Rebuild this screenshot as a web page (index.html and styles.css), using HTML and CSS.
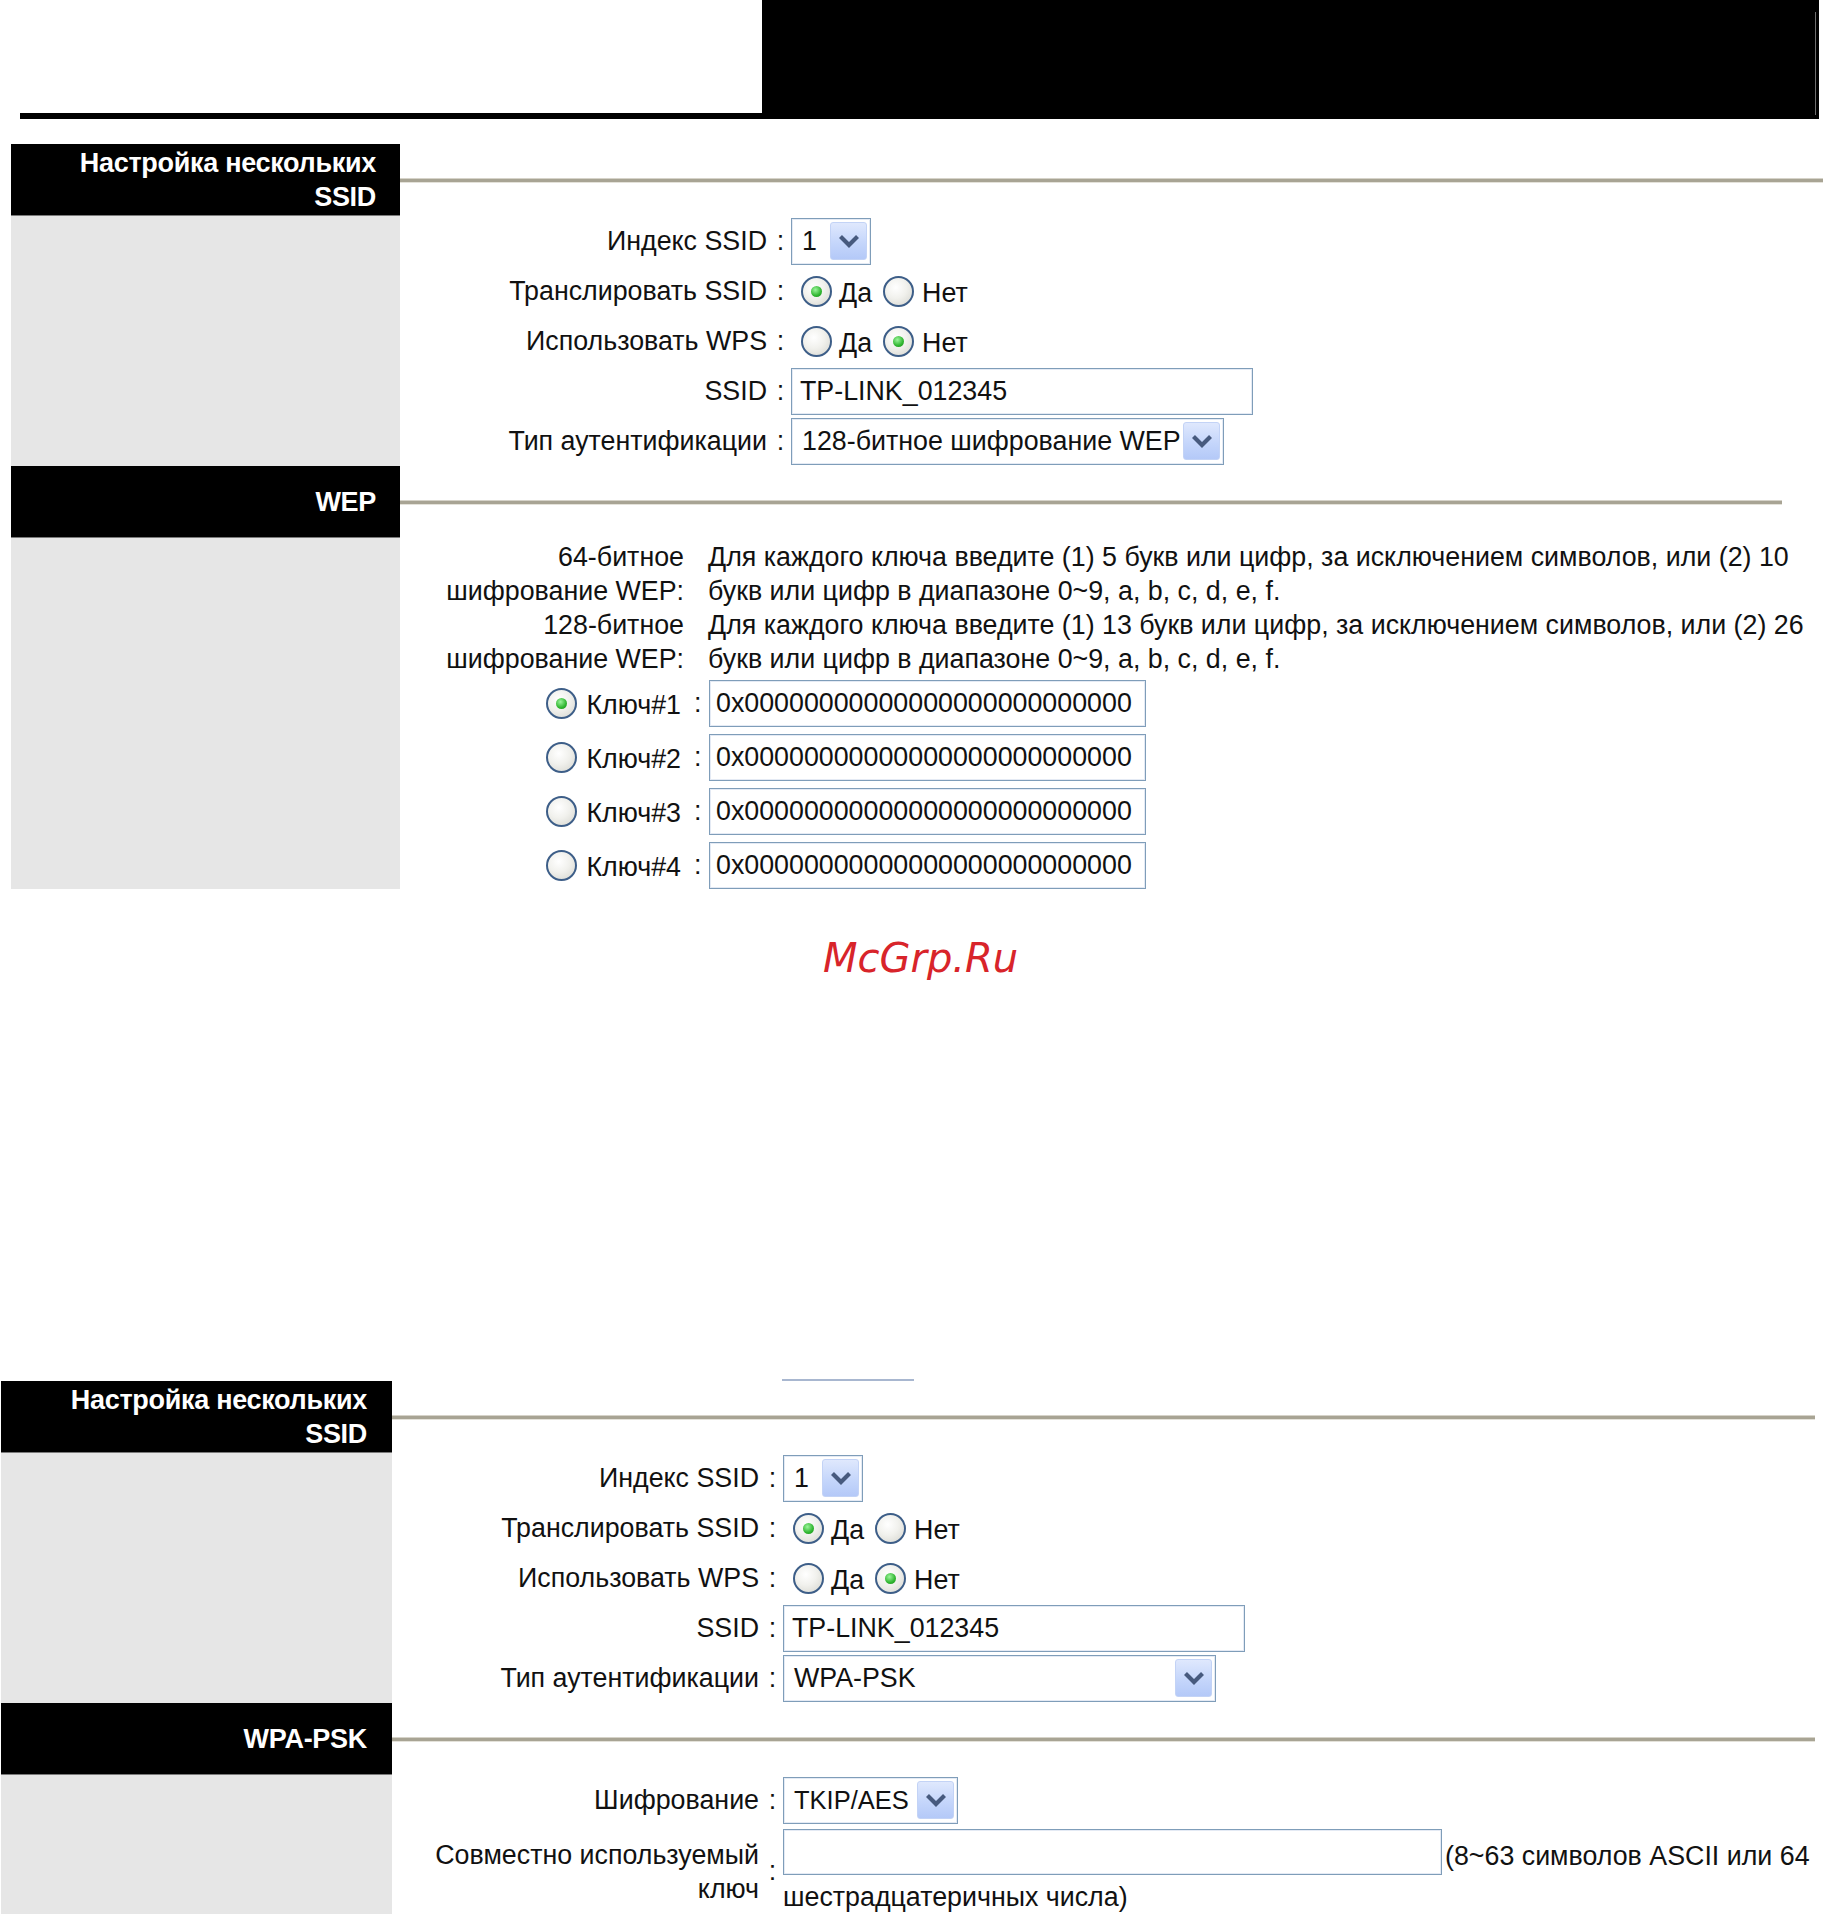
FILE: index.html
```html
<!DOCTYPE html>
<html lang="ru">
<head>
<meta charset="utf-8">
<title>Настройка нескольких SSID</title>
<link rel="stylesheet" href="styles.css">
</head>
<body>
<div class="top">
  <div class="top-left"><div class="top-line"></div></div>
  <div class="top-right"><span class="top-edge"></span></div>
</div>

<section class="panel p1">
  <div class="hdr-title">Настройка нескольких<br>SSID</div>
  <div class="hdr-rule"><div class="rule"></div></div>
  <div class="side"></div>
  <div class="content">
    <div class="row">
      <div class="lbl">Индекс SSID</div><div class="colon">:</div>
      <div class="ctl"><div class="sel w-idx"><span class="sel-text">1</span><span class="sel-btn"><svg width="22" height="14" viewBox="0 0 22 14"><polyline points="2.5,2.5 11,11 19.5,2.5" fill="none" stroke="#475a7e" stroke-width="4.2"/></svg></span></div></div>
    </div>
    <div class="row">
      <div class="lbl">Транслировать SSID</div><div class="colon">:</div>
      <div class="ctl radios"><span class="radio on"></span><span class="rtext">Да</span><span class="radio r2"></span><span class="rtext t2">Нет</span></div>
    </div>
    <div class="row">
      <div class="lbl">Использовать WPS</div><div class="colon">:</div>
      <div class="ctl radios"><span class="radio"></span><span class="rtext">Да</span><span class="radio r2 on"></span><span class="rtext t2">Нет</span></div>
    </div>
    <div class="row">
      <div class="lbl">SSID</div><div class="colon">:</div>
      <div class="ctl"><div class="inp w-ssid1">TP-LINK_012345</div></div>
    </div>
    <div class="row">
      <div class="lbl">Тип аутентификации</div><div class="colon">:</div>
      <div class="ctl"><div class="sel w-auth1"><span class="sel-text">128-битное шифрование WEP</span><span class="sel-btn"><svg width="22" height="14" viewBox="0 0 22 14"><polyline points="2.5,2.5 11,11 19.5,2.5" fill="none" stroke="#475a7e" stroke-width="4.2"/></svg></span></div></div>
    </div>
  </div>

  <div class="hdr-title">WEP</div>
  <div class="hdr-rule short"><div class="rule"></div></div>
  <div class="side"></div>
  <div class="content wep">
    <div class="desc">
      <div class="desc-l">64-битное<br>шифрование WEP:</div>
      <div class="desc-r">Для каждого ключа введите (1) 5 букв или цифр, за исключением символов, или (2) 10<br>букв или цифр в диапазоне 0~9, a, b, c, d, e, f.</div>
      <div class="desc-l">128-битное<br>шифрование WEP:</div>
      <div class="desc-r">Для каждого ключа введите (1) 13 букв или цифр, за исключением символов, или (2) 26<br>букв или цифр в диапазоне 0~9, a, b, c, d, e, f.</div>
    </div>
    <div class="keys">
      <div class="krow"><div class="klbl"><span class="radio on"></span><span class="ktext">Ключ#1</span></div><div class="colon">:</div><div class="inp w-key">0x00000000000000000000000000</div></div>
      <div class="krow"><div class="klbl"><span class="radio"></span><span class="ktext">Ключ#2</span></div><div class="colon">:</div><div class="inp w-key">0x00000000000000000000000000</div></div>
      <div class="krow"><div class="klbl"><span class="radio"></span><span class="ktext">Ключ#3</span></div><div class="colon">:</div><div class="inp w-key">0x00000000000000000000000000</div></div>
      <div class="krow"><div class="klbl"><span class="radio"></span><span class="ktext">Ключ#4</span></div><div class="colon">:</div><div class="inp w-key">0x00000000000000000000000000</div></div>
    </div>
  </div>
</section>

<div class="mark">McGrp.Ru</div>
<div class="blueline"></div>

<section class="panel p2">
  <div class="hdr-title">Настройка нескольких<br>SSID</div>
  <div class="hdr-rule"><div class="rule"></div></div>
  <div class="side"></div>
  <div class="content">
    <div class="row">
      <div class="lbl">Индекс SSID</div><div class="colon">:</div>
      <div class="ctl"><div class="sel w-idx"><span class="sel-text">1</span><span class="sel-btn"><svg width="22" height="14" viewBox="0 0 22 14"><polyline points="2.5,2.5 11,11 19.5,2.5" fill="none" stroke="#475a7e" stroke-width="4.2"/></svg></span></div></div>
    </div>
    <div class="row">
      <div class="lbl">Транслировать SSID</div><div class="colon">:</div>
      <div class="ctl radios"><span class="radio on"></span><span class="rtext">Да</span><span class="radio r2"></span><span class="rtext t2">Нет</span></div>
    </div>
    <div class="row">
      <div class="lbl">Использовать WPS</div><div class="colon">:</div>
      <div class="ctl radios"><span class="radio"></span><span class="rtext">Да</span><span class="radio r2 on"></span><span class="rtext t2">Нет</span></div>
    </div>
    <div class="row">
      <div class="lbl">SSID</div><div class="colon">:</div>
      <div class="ctl"><div class="inp w-ssid1">TP-LINK_012345</div></div>
    </div>
    <div class="row">
      <div class="lbl">Тип аутентификации</div><div class="colon">:</div>
      <div class="ctl"><div class="sel w-auth1 tight"><span class="sel-text">WPA-PSK</span><span class="sel-btn"><svg width="22" height="14" viewBox="0 0 22 14"><polyline points="2.5,2.5 11,11 19.5,2.5" fill="none" stroke="#475a7e" stroke-width="4.2"/></svg></span></div></div>
    </div>
  </div>

  <div class="hdr-title">WPA-PSK</div>
  <div class="hdr-rule"><div class="rule"></div></div>
  <div class="side"></div>
  <div class="content wpa">
    <div class="row">
      <div class="lbl">Шифрование</div><div class="colon">:</div>
      <div class="ctl"><div class="sel w-tkip tight"><span class="sel-text">TKIP/AES</span><span class="sel-btn"><svg width="22" height="14" viewBox="0 0 22 14"><polyline points="2.5,2.5 11,11 19.5,2.5" fill="none" stroke="#475a7e" stroke-width="4.2"/></svg></span></div></div>
    </div>
    <div class="row psk">
      <div class="lbl two">Совместно используемый<br>ключ</div><div class="colon">:</div>
      <div class="ctl">
        <div class="psk-line"><div class="inp w-psk"></div><span class="hint">(8~63 символов ASCII или 64</span></div>
        <div class="hint2">шестрадцатеричных числа)</div>
      </div>
    </div>
  </div>
</section>
</body>
</html>
```

FILE: styles.css
```css
* { box-sizing: border-box; }
html, body { margin: 0; padding: 0; background: #fff; }
body {
  width: 1831px;
  height: 1914px;
  overflow: hidden;
  font-family: "Liberation Sans", Arial, sans-serif;
  font-size: 26.8px;
  color: #111;
}

/* top bar */
.top { display: flex; height: 119px; }
.top-left { width: 762px; display: flex; align-items: flex-end; padding-left: 20px; }
.top-line { flex: 1; height: 6px; background: #000; }
.top-right { width: 1057px; background: #000; position: relative; }
.top-edge { position: absolute; right: 3px; top: 12px; bottom: 4px; width: 1px; background: #6e6e6e; }

/* panels */
.panel { display: grid; }
.p1 { margin-top: 25px; margin-left: 11px; width: 1812px; grid-template-columns: 389px 1fr; }
.p2 { margin-left: 1px; width: 1814px; grid-template-columns: 391px 1fr; }

.hdr-title {
  background: #000;
  color: #fff;
  font-weight: bold;
  font-size: 27px;
  letter-spacing: -0.3px;
  line-height: 34px;
  height: 72px;
  text-align: right;
  padding-right: 24px;
  display: flex;
  flex-direction: column;
  justify-content: center;
  border-bottom: 1px solid #7a7a7a;
}
.p2 .hdr-title { padding-right: 25px; }
.hdr-rule { display: flex; align-items: center; height: 72px; }
.hdr-rule.short { padding-right: 41px; }
.rule {
  flex: 1;
  height: 5px;
  background: linear-gradient(#d6d3c9 0, #d6d3c9 1px, #a8a494 1px, #a8a494 4px, #e4e2da 4px);
}
.side { background: #e6e6e6; }

/* form rows */
.row {
  display: grid;
  grid-template-columns: 370px 21px 1fr;
  height: 50px;
  align-items: center;
}
.lbl { text-align: right; white-space: nowrap; padding-right: 3px; }
.colon { text-align: center; }
.ctl { display: flex; align-items: center; }

.sel {
  display: flex;
  align-items: center;
  height: 47px;
  border: 1px solid #7f9db9;
  box-shadow: inset 0 0 0 1px #e4eaf4;
  background: #fff;
  padding: 0 3px 0 10px;
}
.sel.tight { padding-left: 10px; }
.sel-text { flex: 1; white-space: nowrap; }
.sel-btn {
  width: 37px;
  height: 38px;
  flex: none;
  border-radius: 3px;
  border: 1px solid #c3d3f6;
  background: linear-gradient(#dfe8fd, #c5d6fb 55%, #b4c9f8);
  display: flex;
  align-items: center;
  justify-content: center;
}
.w-idx { width: 80px; }
.w-auth1 { width: 433px; }
.w-tkip { width: 175px; }
.w-tkip .sel-text { font-size: 25.5px; }

.inp {
  height: 47px;
  border: 1px solid #7f9db9;
  box-shadow: inset 0 0 0 1px #e4eaf4;
  background: #fff;
  display: flex;
  align-items: center;
  padding-left: 8px;
  white-space: nowrap;
}
.w-ssid1 { width: 462px; }
.w-key { width: 437px; padding-left: 6px; }
.w-psk { width: 659px; height: 46px; }

/* radios */
.radio {
  width: 31px;
  height: 31px;
  flex: none;
  border-radius: 50%;
  border: 2px solid #3d5e88;
  background: radial-gradient(circle at 40% 35%, #ffffff 0, #f1f1ed 45%, #d4d4cd 100%);
  display: inline-flex;
  align-items: center;
  justify-content: center;
}
.radio.on::after {
  content: "";
  width: 11px;
  height: 11px;
  border-radius: 50%;
  background: radial-gradient(circle at 40% 35%, #9cf59c 0, #2fb52f 60%, #1a8a1a 100%);
}
.radios .radio { margin-left: 10px; }
.radios .radio.r2 { margin-left: 11px; }
.rtext { margin-left: 7px; margin-top: 5px; }
.rtext.t2 { margin-left: 8px; }

/* WEP */
.wep { padding-top: 2px; padding-bottom: 0; }
.desc {
  display: grid;
  grid-template-columns: 284px 1fr;
  column-gap: 24px;
  line-height: 34px;
}
.desc-l { text-align: right; white-space: nowrap; }
.desc-r { white-space: nowrap; }
.keys { margin-top: 4px; display: flex; flex-direction: column; gap: 7px; }
.krow {
  display: grid;
  grid-template-columns: 288px 21px 1fr;
  align-items: center;
  height: 47px;
}
.klbl { display: flex; align-items: center; justify-content: flex-end; padding-right: 7px; }
.ktext { margin-left: 9px; margin-top: 4px; }
.krow .colon { text-align: left; padding-left: 6px; }

/* watermark */
.mark {
  margin-top: 45px;
  margin-left: 823px;
  font-family: "DejaVu Sans", sans-serif;
  font-style: italic;
  font-size: 40px;
  line-height: 48px;
  color: #d8242a;
}
.blueline {
  margin-top: 397px;
  margin-left: 782px;
  width: 132px;
  height: 2px;
  background: #a8b7d0;
}

/* WPA */
.wpa { padding-bottom: 20px; }
.row.psk { height: auto; padding-top: 4px; }
.lbl.two { line-height: 34px; }
.psk-line { display: flex; align-items: center; }
.hint { margin-left: 3px; margin-top: 8px; white-space: nowrap; }
.hint2 { margin-top: 5px; line-height: 34px; white-space: nowrap; }
.row.psk .ctl { flex-direction: column; align-items: flex-start; }
```
